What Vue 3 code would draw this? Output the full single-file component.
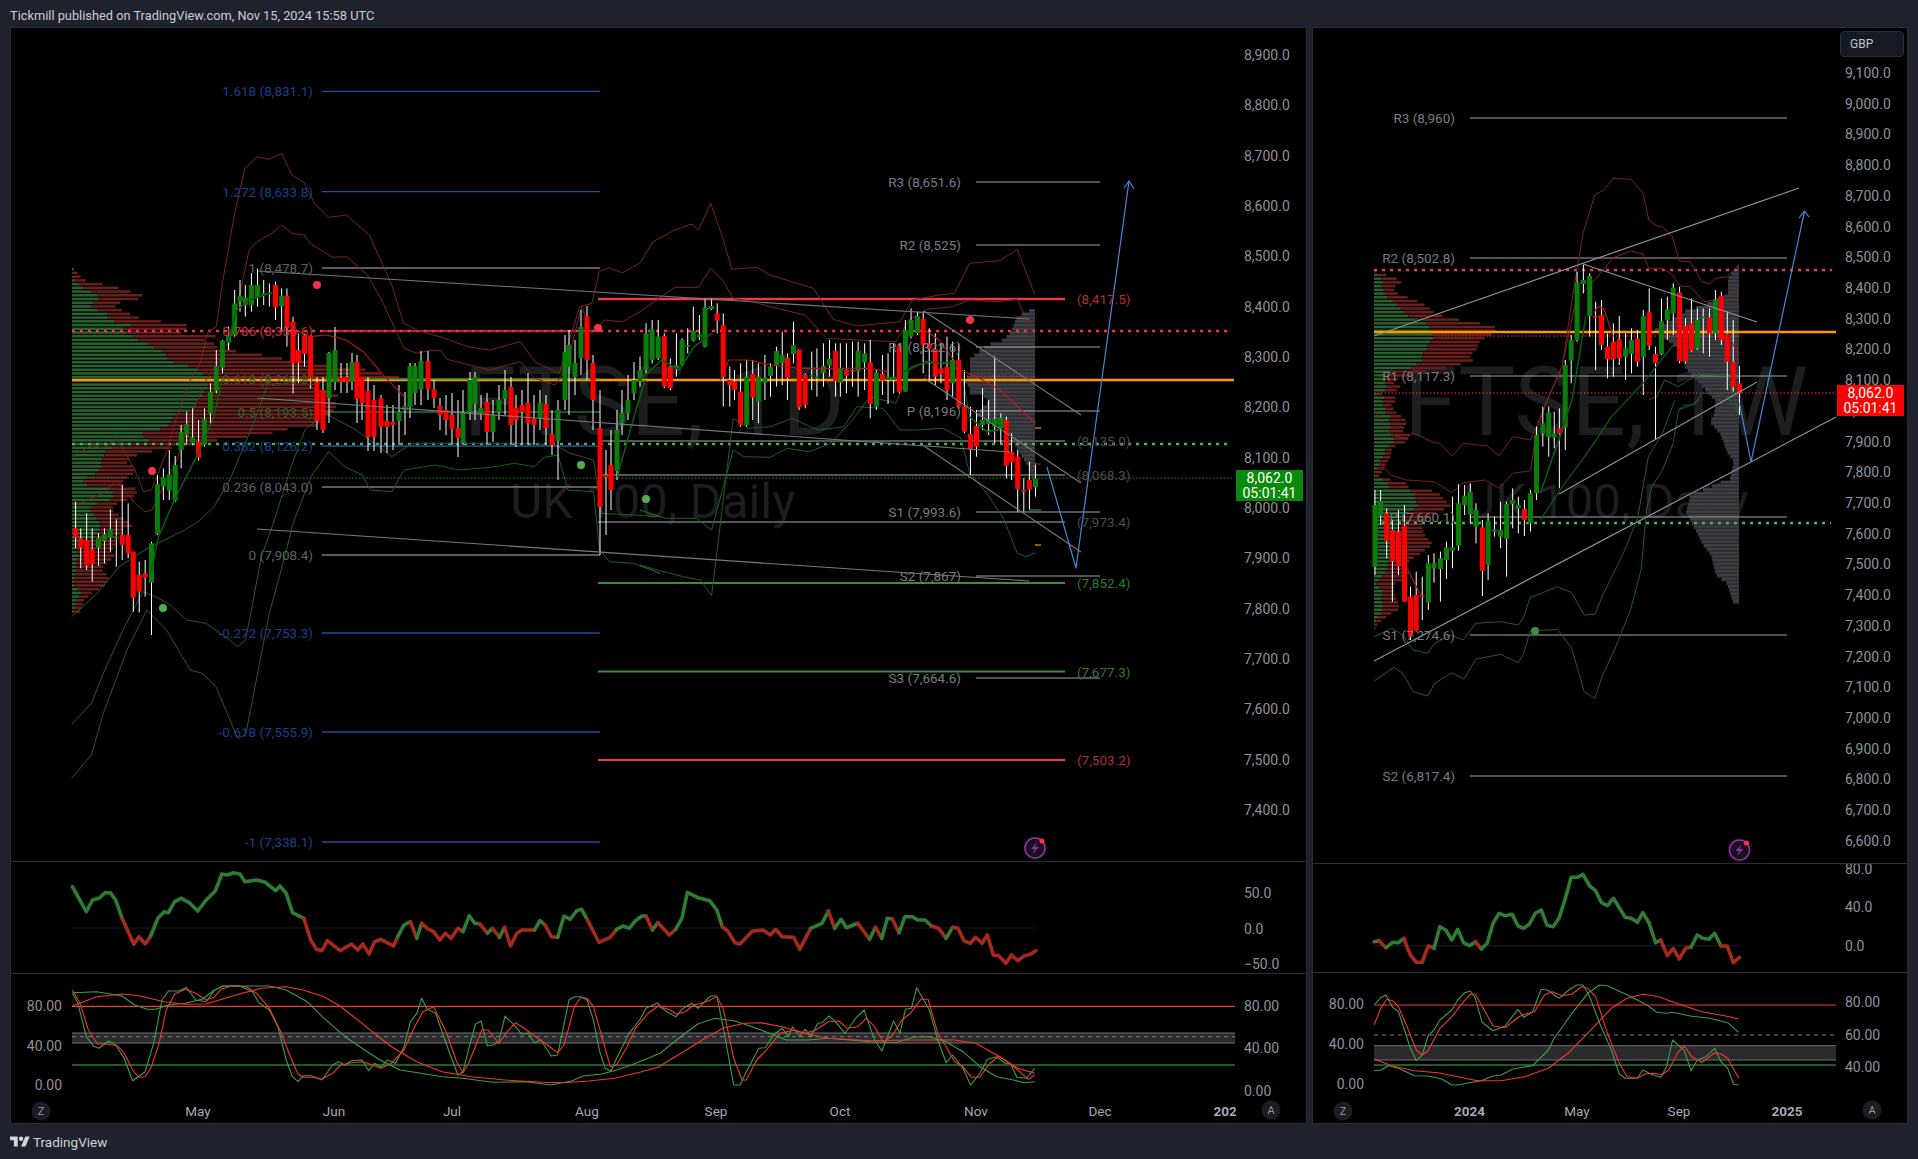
<script setup>
// zoom crops were read off at different x scales, y is always 3x
const frame = (ox, oy, sx, sy = 3) => (s) =>
  s.trim().split(/\s+/).map((p) => {
    const [x, y] = p.split(',').map(Number)
    return [ox + x / sx, oy + y / sy]
  })
const z1 = frame(0, 0, 2.45)
const z2 = frame(640, 200, 2.306)
const z3 = frame(1300, 0, 2.537)
const z4 = frame(0, 850, 2.376)
const z5 = frame(660, 820, 2.376)
const z6 = frame(1300, 820, 2.537)
const z7 = frame(1360, 400, 2.81)
const z8 = frame(40, 380, 2.529)
const real = frame(0, 0, 1, 1)

const GREEN = '#0b7d0b'
const RED = '#ff0000'
const BAND_RED = '#7a231d'
const BAND_GREEN = '#235c28'

const poly = (pts, stroke, width = 1) => ({
  tag: 'polyline',
  attrs: {
    points: pts.map((p) => p[0].toFixed(1) + ',' + p[1].toFixed(1)).join(' '),
    fill: 'none',
    stroke,
    'stroke-width': width,
    'stroke-linejoin': 'round'
  }
})
const line = (x1, y1, x2, y2, stroke, width = 1, dash) => ({
  tag: 'line',
  attrs: { x1, y1, x2, y2, stroke, 'stroke-width': width, 'stroke-dasharray': dash }
})
const rect = (x, y, w, h, fill) => ({ tag: 'rect', attrs: { x, y, width: w, height: h, fill } })
const circle = (cx, cy, r, fill, stroke) => ({
  tag: 'circle',
  attrs: { cx, cy, r, fill, stroke, 'stroke-width': stroke ? 1.5 : undefined }
})
const text = (x, y, str, cls = 'axis', anchor = 'start', fill) => ({
  text: str,
  attrs: { x, y, class: cls, 'text-anchor': anchor, fill }
})

// rows: "x colour bodyTop bodyBottom wickTop wickBottom"
const candles = (map, rows, width = 5) => {
  const wicks = []
  const bodies = []
  rows.split(';').forEach((row) => {
    const [x, c, t, b, wt, wb] = row.trim().split(/\s+/)
    const [[px, top], [, bot], [, wickTop], [, wickBot]] = map(`${x},${t} ${x},${b} ${x},${wt} ${x},${wb}`)
    wicks.push(line(px, wickTop, px, wickBot, '#ffffff', 1))
    bodies.push(rect(px - width / 2, top, width, Math.max(bot - top, 1.5), c === 'g' ? GREEN : RED))
  })
  return [...wicks, ...bodies]
}

// linear lookup between table rows [y, a, b]
const lookup = (table, y) => {
  let i = 0
  while (i < table.length - 2 && table[i + 1][0] < y) i++
  const [y0, a0, b0] = table[i]
  const [y1, a1, b1] = table[i + 1]
  const t = Math.min(1, Math.max(0, (y - y0) / (y1 - y0)))
  return [a0 + (a1 - a0) * t, b0 + (b1 - b0) * t]
}

const parseTable = (s) => s.trim().split(/[;\n]+/).filter((r) => r.trim()).map((r) => r.trim().split(/\s+/).map(Number))

const volumeLeft = (x0, rows, step = 3.72) => {
  const table = parseTable(rows)
  const out = []
  for (let y = table[0][0]; y <= table[table.length - 1][0]; y += step) {
    const [g, r] = lookup(table, y)
    out.push(rect(x0, y, g - x0, 2.5, '#28622e'))
    out.push(rect(g, y, Math.max(r - g, 0), 2.5, '#6b1f1b'))
  }
  return out
}
const volumeRight = (xEnd, rows, step = 3.72) => {
  const table = parseTable(rows).map((r) => [r[0], r[1], r[1]])
  const under = []
  const over = []
  for (let y = table[0][0]; y <= table[table.length - 1][0]; y += step) {
    const [x] = lookup(table, y)
    under.push(rect(x, y, xEnd - x, step + 0.3, '#2c2d31'))
    over.push(rect(x, y, xEnd - x, 2.4, '#3d3e44'))
  }
  return [...under, ...over]
}

// thick oscillator line split in coloured runs
const trendRuns = (map, runs) =>
  runs.map(([c, s]) => {
    const shape = poly(map(s), c === 'g' ? '#2f7d32' : '#a52a1c', 3.6)
    shape.attrs['stroke-linecap'] = 'round'
    return shape
  })

const priceLabels = (from, to, step, yOf, x) => {
  const out = []
  for (let p = from; p >= to; p -= step) {
    out.push(text(x, yOf(p), p.toLocaleString('en-US') + '.0'))
  }
  return out
}

const bolt = (cx, cy) => [
  circle(cx, cy, 11.5, '#14141a'),
  circle(cx, cy, 10, 'none', '#9c27b0'),
  {
    tag: 'path',
    attrs: {
      d: `M${cx + 2.5} ${cy - 6}L${cx - 4} ${cy + 1}H${cx}L${cx - 2.5} ${cy + 6}L${cx + 4} ${cy - 1}H${cx}Z`,
      fill: '#9c27b0'
    }
  },
  circle(cx + 7, cy - 7, 2.6, '#f23645')
]

const roundBtn = (cx, cy, label) => [
  circle(cx, cy, 9.5, '#1c1d24'),
  text(cx, cy, label, 'tiny', 'middle')
]

const badge = (x, y, w, h, fill) => [
  rect(x, y, w, h, fill),
  text(x + w / 2, y + h * 0.27, '8,062.0', 'badge', 'middle'),
  text(x + w / 2, y + h * 0.73, '05:01:41', 'badge', 'middle')
]

/* ---------- left chart, daily ---------- */
const leftY = (p) => 205.9 + (8600 - p) * 0.5035

const leftCandles = [
  ...candles(z8, `90 r 445 472 365 505;103 r 475 503 445 565;118 r 480 557 400 570;132 r 508 552 445 605;148 g 473 503 460 558;
    163 g 463 483 445 550;178 g 448 473 388 515;193 g 470 472 418 560;208 r 465 495 315 540;223 r 465 520 370 535;236 r 515 653 515 695;
    251 r 585 635 545 697;266 r 580 593 540 650;282 g 490 608 485 765;297 g 313 462 285 465;312 g 292 320 265 360;327 g 283 332 210 360;
    342 g 255 362 228 365;357 g 157 210 135 265;371 g 133 165 95 190;386 g 172 190 85 195;401 r 185 233 120 242;416 g 118 195 85 200;
    431 g 35 100 10 135`),
  ...candles(z1, `530 g 1098 1172 1050 1180;545 g 1022 1103 1020 1120;560 g 1005 1028 980 1050;575 g 910 1005 870 1010;588 g 888 905 840 935;
    601 g 892 915 855 950;616 g 855 915 820 935;631 g 855 893 805 920;646 g 880 882 840 915;660 g 878 880 850 920;675 r 855 922 845 960;
    690 g 887 918 865 990;703 r 888 983 865 1040;718 r 965 1090 950 1180;731 r 1050 1088 1000 1150;746 r 1008 1062 1000 1100;761 r 1010 1135 1005 1165`),
  ...candles(real, `317 r 382 421 377 430;323 r 390 430 377 433;329 g 353 398 352 423;335 g 350 382 327 390;341 r 378 382 363 393;347 r 377 382 363 393;
    352 g 362 382 353 390;357 r 362 399 355 423;362 r 377 403 377 420;368 r 391 437 377 451;374 r 400 437 385 451;381 r 398 427 395 453;
    387 r 421 427 405 453;393 r 422 425 405 450;399 g 412 421 385 445;405 g 406 410 392 435;410 g 366 407 363 418;415 g 366 393 363 405;
    421 g 361 389 351 405;428 r 361 389 351 400;434 r 389 398 380 408;440 r 406 415 398 430;446 r 410 420 395 435;452 r 415 429 393 445;
    458 r 428 438 400 457;463 g 413 443 390 445;470 g 380 412 372 420;475 g 377 404 372 420;481 g 408 413 395 420;487 r 402 432 393 445;
    493 g 415 432 400 442;499 g 400 412 385 420;505 g 390 399 370 415;511 r 387 425 377 445;516 r 408 420 395 447;522 r 405 412 390 445;
    528 r 403 423 373 445;534 r 419 425 395 445;540 g 403 418 390 430;546 r 404 428 395 445;552 r 434 445 410 455;558 g 410 441 400 480;
    565 g 352 400 335 410;569 g 345 367 330 415;575 g 363 377 340 395;581 g 327 358 310 375;587 r 316 360 306 380;593 r 363 400 355 430;
    600 r 428 507 390 555;606 r 475 477 450 535;611 r 465 490 430 510;617 g 430 471 410 480;622 g 413 423 390 435;628 g 400 413 375 420;
    634 g 380 393 362 400`),
  ...candles(z2, `0 g 510 545 470 560;14 g 400 510 370 520;28 g 388 480 360 490;42 g 410 475 360 480;56 r 408 560 400 565;70 r 500 565 475 570;
    84 g 495 505 400 530;97 g 420 495 415 500;110 g 435 440 385 460;123 g 392 422 320 425;137 g 403 412 345 420;150 g 322 440 295 442;
    165 g 318 327 295 330;178 r 340 362 310 400;192 r 375 530 340 620;207 r 540 555 500 620;218 r 545 570 510 600;232 r 575 675 490 680;
    246 g 530 675 480 680;260 r 522 592 480 660;273 g 530 605 490 670;288 g 533 548 465 600;301 g 500 528 490 590;315 g 453 495 440 560;
    328 g 465 490 395 555;340 r 473 533 460 600;354 g 435 462 365 490;367 r 448 622 450 630;381 r 525 615 520 625;396 g 525 528 455 570;
    408 g 530 533 445 590;423 g 498 518 430 560;437 g 477 497 420 530;451 r 453 543 430 590;462 g 505 548 430 590;476 r 510 527 430 580;
    490 r 510 513 425 560;503 g 453 513 425 590;518 g 460 488 430 570;531 r 487 612 420 655;545 g 518 620 510 630;559 r 522 542 465 585;
    572 g 530 540 460 612;585 g 530 540 430 580;598 r 437 575 430 580;612 g 390 575 360 575;625 g 360 410 325 415;640 g 348 400 335 405;
    653 r 356 435 335 520;667 r 430 447 385 545;681 r 447 530 400 555;694 r 505 522 430 550;708 r 500 572 410 600;721 g 480 550 425 590;
    735 r 480 620 430 625;748 r 620 695 510 700;762 r 702 748 620 825;776 r 678 740 630 770;790 g 660 675 565 690;804 g 658 672 600 705;
    818 g 657 680 470 730;832 g 653 685 640 730;845 r 660 797 650 835;857 r 755 787 700 840;871 r 770 867 750 935;885 r 870 873 835 935;
    898 r 840 868 785 930;912 g 835 862 790 890`)
]

const leftBands = [
  poly([...z8('80,230 130,195 160,205 195,175 240,270 262,335 282,330 320,215 345,115 380,0'),
    ...z1('490,1090 510,995 530,980 545,850 575,640 600,505 630,470 660,478 690,460 715,525 745,548 770,610 805,652 848,645 905,705 960,855 988,968 1020,990 1090,1015 1145,1040 1200,1050 1275,1025 1310,1085 1370,1120 1420,920 1450,910 1468,815 1490,803 1525,818 1568,790'),
    ...z2('30,125 80,90 120,72 135,90 163,10 190,110 212,208 270,202 300,225 350,245 400,265 445,358 500,378 600,365 628,300 690,285 725,280 760,190 830,182 870,148 910,282')], BAND_RED),
  poly([...z8('80,380 130,355 160,340 195,300 240,370 265,395 283,390 320,300 345,245 380,110 420,0'),
    ...z1('560,1040 590,870 610,750 630,725 660,705 690,675 715,700 745,705 760,730 815,772 850,770 900,825 935,900 990,1045 1020,1060 1050,1052 1080,1052 1095,1078 1200,1110 1275,1085 1310,1135 1360,1155 1390,1100 1400,1040 1425,920'),
    ...z1('1450,1000 1480,960 1525,965 1568,935'),
    ...z2('80,262 135,262 163,205 190,240 215,295 260,305 300,320 380,345 430,415 500,420 590,425 620,360 660,328 720,320 760,300 820,305 870,298 912,415')], BAND_RED),
  poly([...z8('80,710 145,640 200,560 265,510 365,450 400,425 440,380 480,300 540,130 580,0')], BAND_GREEN),
  poly([...z8('80,1033 130,970 160,880 210,750 260,635 300,655 330,675 370,720 420,730 480,780 500,800 520,780 560,530 590,430 635,260 670,150 720,100 800,150 890,230 940,190 1000,190 1100,190 1250,190 1310,200 1340,220 1400,240 1420,400 1500,405 1568,410'),
    ...z2('0,930 60,955 130,955 165,990 215,750 240,770 300,772 340,745 390,755 440,730 490,660 530,590 590,610 625,500 650,490 720,490 745,540 760,650 790,690 820,690 835,680')], BAND_GREEN),
  poly([...z8('80,1195 130,1125 160,1000 220,810 270,690 320,750 340,790 380,870 410,880 445,920 500,1075 520,1065 580,700 610,570 640,430 685,290 730,215 770,260 815,285 835,330 890,335 920,270 1000,255 1060,270 1140,262 1200,250 1250,260 1275,232 1310,225 1335,330 1400,335 1415,510 1440,545 1500,550 1568,580'),
    ...z2('0,1095 40,1110 100,1130 140,1140 165,1187 215,655 250,685 300,680 350,655 410,690 470,680 500,620 560,625 600,690 640,690 700,685 740,715 760,820 800,880 840,960 870,1060 890,1070 912,1058')], BAND_GREEN)
]

const leftAverages = [
  poly(z1('718,985 760,1010 800,1005 848,1020 890,1055 935,1120 990,1190'), '#a81818', 1.2),
  poly(z2('185,540 205,480 250,480 300,495 370,505 450,505 530,505 570,515'), '#a81818', 1.2),
  poly(z2('650,385 690,420 740,510 790,540 830,570 912,670'), '#b71c1c', 1.2),
  poly(z8('282,570 300,470 340,360 400,220 440,110 460,0'), '#0a5f0a', 1.5),
  poly(z1('555,1040 580,930 610,900 665,878'), '#0a5f0a', 1.5),
  poly(z8('1460,290 1500,120 1530,0'), '#0a5f0a', 1.5),
  poly(z2('0,540 50,480 90,510 125,440 165,400'), '#0a5f0a', 1.5),
  poly(z2('600,520 660,485 720,490'), '#0a5f0a', 1.5),
  poly(z2('760,650 800,695 830,690'), '#0a5f0a', 1.5)
]

const fibs = [
  ['1.618 (8,831.1)', 91.3, '#1c4f9c', '#14408c'],
  ['1.272 (8,633.8)', 191.7, '#1c4f9c', '#14408c'],
  ['1 (8,478.7)', 268, '#787b86', '#5d606b'],
  ['0.786 (8,356.6)', 331, '#f23645', '#c9303c'],
  ['0.618 (8,260.8)', 379, '#388e3c', '#2f5f32'],
  ['0.5 (8,193.5)', 412, '#2e6b32', '#2f5f32'],
  ['0.382 (8,126.2)', 446, '#1c4f9c', '#14408c'],
  ['0.236 (8,043.0)', 487, '#787b86', '#5d606b'],
  ['0 (7,908.4)', 555, '#787b86', '#5d606b'],
  ['-0.272 (7,753.3)', 633, '#1c4f9c', '#14408c'],
  ['-0.618 (7,555.9)', 732, '#1c4f9c', '#14408c'],
  ['-1 (7,338.1)', 842, '#1c4f9c', '#14408c']
]
const leftPivots = [
  ['R3 (8,651.6)', 182], ['R2 (8,525)', 245], ['R1 (8,322.6)', 347], ['P (8,196)', 411],
  ['S1 (7,993.6)', 512], ['S2 (7,867)', 576], ['S3 (7,664.6)', 678]
]
const leftLevels = [
  ['(8,417.5)', 299, '#f23645', '#b02c38', 2.5],
  ['(8,135.0)', 441, '#555558', '#4c4c50', 2],
  ['(8,068.3)', 475, '#555558', '#4c4c50', 2],
  ['(7,973.4)', 522, '#555558', '#4c4c50', 2],
  ['(7,852.4)', 583, '#388e3c', '#2f7a33', 2],
  ['(7,677.3)', 671.5, '#388e3c', '#2f7a33', 2],
  ['(7,503.2)', 760, '#f23645', '#b02c38', 2]
]

const leftMain = [
  text(654, 402, 'FTSE, 1D', 'mark-big', 'middle'),
  text(653, 501, 'UK 100, Daily', 'mark-small', 'middle'),
  ...volumeLeft(72, `268 73 74;272 72 78;276 73 81;280 76 87;284 81 109;287 84 120;291 93 133;295 99 145;299 98 135;302 92 117;306 91 115;
    310 100 124;313 108 131;317 108 140;321 116 167;324 132 188;328 122 186;332 127 180;335 133 216;339 139 204;343 151 216;347 155 218;
    350 163 237;354 167 265;358 167 286;362 175 322;365 190 331;369 200 371;373 204 384;376 212 400;383 208 314;387 208 318;391 204 331;
    394 204 339;398 198 329;403 196 337;408 196 335;413 176 331;418 172 317;423 170 329;427 166 291;431 143 277;435 143 250;439 150 218;
    448 105 163;453 105 139;460 101 125;467 101 135;473 95 133;478 83 125;483 83 121;488 113 137;493 113 137;498 113 129;504 91 113;
    510 91 113;515 95 121;520 99 127;524 101 134;528 99 123;533 99 121;537 93 115;541 76 115;545 74 115;550 76 111;555 80 115;560 76 109;
    565 76 103;570 76 103;575 74 109;580 74 107;584 74 105;588 78 99;592 82 91;597 78 87;600 76 83;604 76 83;608 74 81;612 74 80`),
  ...volumeRight(1035, `309 1029;315 1017;330 1011;338 1004;343 989;347 983;357 970;373 970;380 963;385 970;392 970;393 983;400 989;413 976;427 1006;440 1013;453 1021;467 1030;477 1032`),
  line(72, 380, 1234, 380, '#ff9800', 2.5),
  line(72, 331, 1232, 331, '#f23645', 2.5, '3 5'),
  line(72, 444, 1232, 444, '#4caf50', 2.5, '3 5'),
  line(72, 478, 1234, 478, '#1c8f1c', 1, '1.5 2'),
  line(925, 376, 1035, 376, '#f23645', 1, '1.5 2'),
  ...fibs.map(([, y, c]) => line(322, y, 600, y, c, 1.3)),
  ...leftPivots.map(([, y]) => line(976, y, 1100, y, '#a0a3ab', 1.2)),
  ...leftLevels.map(([, y, c, , w]) => line(598, y, 1065, y, c, w)),
  ...leftBands,
  ...leftCandles,
  ...leftAverages,
  line(258, 271, 1029, 319, '#77797f', 1.1),
  line(257, 398, 1010, 452, '#77797f', 1.1),
  line(257, 529, 1029, 581, '#77797f', 1.1),
  line(924, 311, 1081, 415, '#77797f', 1.1),
  line(924, 378, 1081, 483, '#77797f', 1.1),
  line(924, 446, 1081, 552, '#77797f', 1.1),
  line(1035, 428, 1041, 428, '#ff9800', 1.2),
  line(1035, 545, 1041, 545, '#ff9800', 1.2),
  line(1035, 464, 1041, 464, '#7a2320', 1.2),
  line(1029, 510, 1041, 510, '#1f6b5e', 1.5),
  poly(real('1047,467 1076,568 1129,181'), '#4a86d8', 1.2),
  poly(real('1124,188 1129,181 1134,189'), '#4a86d8', 1.2),
  circle(317, 285, 4, '#f23645'),
  circle(152, 471, 4, '#f23645'),
  circle(598, 328, 4, '#f23645'),
  circle(970, 320, 4, '#f23645'),
  circle(163, 608, 4, '#4caf50'),
  circle(581, 465, 4, '#4caf50'),
  circle(646, 499, 4, '#4caf50'),
  ...fibs.map(([t, y, , c]) => text(313, y, t, 'lbl', 'end', c)),
  ...leftPivots.map(([t, y]) => text(961, y, t, 'lbl', 'end', '#787b86')),
  ...leftLevels.map(([t, y, , c]) => text(1077, y, t, 'lbl', 'start', c)),
  ...priceLabels(8900, 7400, 100, leftY, 1244),
  ...badge(1236, 470, 67, 31, '#0a8a0a'),
  ...bolt(1035, 848)
]

const leftOsc = [
  line(72, 928, 1035, 928, '#181a22', 1.2),
  ...trendRuns(z4, [
    ['g', '172,110 205,185 220,150 235,145 250,128 262,128 275,150 290,205'],
    ['r', '290,205 318,283 330,260 345,282 358,258'],
    ['g', '358,258 375,205 390,185 400,188 415,155 430,145 450,158 470,183 490,150 512,122 527,72 540,75 555,68 570,72 582,95 610,90 630,97 655,122 665,108 680,130 695,188 722,205'],
    ['r', '722,205 738,270 752,298 765,302 778,272 808,302 835,282 850,300 862,282 877,312 890,275 905,268 935,288 945,260'],
    ['g', '945,260 960,225 975,215'],
    ['r', '975,215 990,265'],
    ['g', '990,265 1002,220'],
    ['r', '1002,220 1018,238 1030,245 1045,270 1058,250 1072,265 1088,235 1100,245'],
    ['g', '1100,245 1115,197 1128,220 1140,222'],
    ['r', '1140,222 1158,250'],
    ['g', '1158,250 1170,235'],
    ['r', '1170,235 1187,262'],
    ['g', '1187,262 1199,232'],
    ['r', '1199,232 1213,288 1228,250 1240,240 1270,240'],
    ['g', '1270,240 1283,212 1295,225'],
    ['r', '1295,225 1310,260 1325,262'],
    ['g', '1325,262 1340,198 1355,208 1370,182 1382,178 1395,208'],
    ['r', '1395,208 1423,277 1450,262 1465,238'],
    ['g', '1465,238 1480,228 1495,235 1510,212 1525,198 1535,198'],
    ['r', '1535,198 1550,240'],
    ['g', '1550,240 1563,218'],
    ['r', '1563,218 1568,225']
  ]),
  ...trendRuns(z5, [
    ['r', '0,315 22,345 37,328'],
    ['g', '37,328 52,295 65,217 90,233 118,242 135,270 148,320'],
    ['r', '148,320 162,335 178,368 190,372 220,333 245,330 262,345 275,328 290,350 318,352 332,388 358,325'],
    ['g', '358,325 385,310 400,273'],
    ['r', '400,273 415,325'],
    ['g', '415,325 430,298 443,323 470,310'],
    ['r', '470,310 498,358'],
    ['g', '498,358 512,322'],
    ['r', '512,322 527,355'],
    ['g', '527,355 540,295 552,297'],
    ['r', '552,297 568,338'],
    ['g', '568,338 582,290 600,290 612,300 630,300 645,318'],
    ['r', '645,318 662,325 680,355'],
    ['g', '680,355 695,322'],
    ['r', '695,322 708,325 722,362 737,370 750,352 765,370 778,345 792,405 805,407 822,430 835,405 850,422 865,408 880,403 893,392']
  ]),
  text(1244, 893, '50.0'),
  text(1244, 929, '0.0'),
  text(1244, 964, '−50.0')
]

const STOCH_GREEN = '#3f9e44'
const STOCH_RED = '#f0392b'

const leftStoch = [
  rect(72, 1033, 1163, 10, '#2b2b2d'),
  line(72, 1033, 1235, 1033, '#6f7178', 1),
  line(72, 1043, 1235, 1043, '#6f7178', 1),
  line(72, 1036.7, 1235, 1036.7, '#787b86', 1, '4 4'),
  line(72, 1006.3, 1235, 1006.3, '#f23a2c', 1.2),
  line(72, 1065, 1235, 1065, '#4caf50', 1.2),
  poly([...z4('172,430 185,460 205,560 222,588 235,595 258,573 275,585 295,625 315,692 345,665 365,580 385,450 400,423 425,423 443,412 465,450 490,455 510,420 530,408 570,408 600,425 615,458 640,480 660,530 680,630 695,680 708,695 720,677 740,677 765,690 790,645 805,635 820,645 835,632 860,630 876,662 890,640 905,652 920,630 940,640 960,590 975,515 990,490 1002,445 1015,478 1035,490 1060,580 1088,675 1100,665 1115,590 1130,522 1143,513 1158,588 1172,585 1185,575 1200,498 1225,530 1240,553 1255,550 1270,578 1285,570 1310,618 1325,615 1352,450 1365,440 1380,440 1395,450 1410,510 1425,605 1438,655 1452,663 1465,625 1495,550 1520,510 1535,475 1563,458'),
    ...z5('0,560 20,578 38,590 52,568 75,550 90,565 120,528 135,528 150,620 175,795 190,795 205,755 235,685 250,683 270,645 290,625 305,650 315,620 332,650 345,628 358,650 375,610 385,608 402,588 420,610 440,640 465,595 485,570 510,660 527,693 555,603 570,640 583,568 597,565 610,503 640,570 660,660 680,728 695,705 720,745 738,795 760,760 778,718 800,710 820,730 832,730 848,772 870,775 890,745')], STOCH_GREEN, 1.1),
  poly([...z4('172,420 190,460 210,540 232,582 255,582 280,588 295,610 315,660 330,682 345,680 360,650 378,580 395,480 415,432 440,418 465,430 490,450 510,440 525,418 550,408 585,410 610,430 640,475 665,540 690,620 708,672 720,682 745,682 765,688 790,670 810,645 835,638 860,635 880,643 905,655 930,640 960,600 985,530 1005,485 1030,470 1060,545 1085,635 1100,668 1115,635 1145,540 1160,540 1185,580 1205,545 1225,518 1245,535 1270,558 1295,580 1325,608 1340,585 1365,470 1380,442 1395,445 1410,470 1430,560 1450,650 1465,645 1490,590 1510,535 1540,490 1568,465'),
    ...z5('0,560 25,570 38,582 60,575 80,555 110,545 135,530 150,565 175,715 195,780 205,780 230,720 260,680 285,640 320,630 345,640 370,630 400,605 425,603 445,625 470,620 490,595 510,620 530,665 550,650 575,600 595,580 620,538 637,538 660,640 680,680 700,725 720,740 740,772 760,772 780,735 805,708 830,730 850,750 875,778 890,765')], STOCH_RED, 1.1),
  poly([...z4('172,428 230,425 290,438 320,465 350,478 370,478 400,465 440,460 480,448 510,420 530,408 640,408 680,420 730,455 770,505 820,560 860,595 900,628 950,660 1000,670 1050,680 1100,685 1170,697 1250,695 1310,705 1360,692 1385,678 1430,672 1465,660 1500,645 1540,625 1568,610'),
    ...z5('0,700 30,670 60,640 90,612 130,595 175,602 200,612 240,630 300,660 350,660 400,655 450,660 500,665 560,668 600,652 640,650 680,665 720,695 760,740 800,770 840,780 865,788 890,785')], STOCH_GREEN, 1.1),
  poly([...z4('172,468 230,440 290,432 330,437 390,455 440,463 490,462 560,435 620,415 680,410 720,420 770,440 810,470 870,530 930,590 990,635 1050,665 1120,680 1200,690 1290,697 1340,698 1400,693 1460,685 1520,667 1568,650'),
    ...z5('0,738 50,700 100,660 150,625 200,610 240,608 290,620 340,640 400,655 500,662 600,660 700,660 750,670 800,705 850,745 890,760')], STOCH_RED, 1.1),
  text(62, 1005.7, '80.00', 'axis', 'end'),
  text(62, 1045.7, '40.00', 'axis', 'end'),
  text(62, 1084.7, '0.00', 'axis', 'end'),
  text(1244, 1005.7, '80.00'),
  text(1244, 1047.7, '40.00'),
  text(1244, 1090.7, '0.00'),
  ...['May:198', 'Jun:334', 'Jul:452', 'Aug:587', 'Sep:716', 'Oct:840', 'Nov:976', 'Dec:1100'].map((m) => {
    const [name, x] = m.split(':')
    return text(+x, 1110.7, name, 'time', 'middle')
  }),
  text(1229, 1110.7, '2025', 'time year', 'middle'),
  rect(1236, 1098, 60, 25, '#000000'),
  ...roundBtn(41, 1111, 'Z'),
  ...roundBtn(1271, 1110, 'A')
]

/* ---------- right chart, weekly ---------- */
const rightY = (p) => 72.9 + (9100 - p) * 0.3072

const rightPivots = [
  ['R3 (8,960)', 118], ['R2 (8,502.8)', 258], ['R1 (8,117.3)', 376],
  ['P (7,660.1)', 517], ['S1 (7,274.6)', 635], ['S2 (6,817.4)', 776]
]

const rightCandles = [
  ...candles(z7, `42 g 315 500 270 525;58 g 303 348 270 375;75 r 340 423 325 475;91 r 390 483 360 605;108 r 395 500 330 525;125 r 378 605 315 605;
    142 r 590 710 560 720;158 r 585 693 515 695;175 r 586 590 530 660;192 g 490 608 465 630;208 g 490 505 460 548;226 g 475 507 455 605;
    243 g 442 480 425 537;260 g 442 452 290 505;277 g 310 437 253 452;294 g 287 315 255 345;310 g 275 342 250 370;326 g 330 380 310 430;
    344 r 382 513 360 588;360 g 362 495 340 540;378 g 388 395 350 410;395 g 390 410 305 445;412 g 312 417 305 530;429 g 300 312 265 385;
    445 g 315 326 290 400;462 r 327 360 300 408;479 g 280 370 270 395`),
  ...candles(z3, `600 g 1305 1480 1280 1500;616 g 1270 1300 1220 1340;631 g 1237 1312 1220 1370;645 g 1300 1312 1235 1345;658 r 1285 1300 1225 1465;
    673 g 1095 1283 1080 1350;688 g 1020 1082 1005 1150;703 g 848 1020 815 1025;719 g 840 852 795 880;735 g 828 948 820 1010;750 r 948 952 905 1110;
    765 r 945 1035 900 1050;780 r 1040 1078 1000 1135;795 r 1025 1078 970 1130;810 r 1018 1075 948 1095;826 g 1045 1070 1000 1140;841 g 1020 1062 985 1120;
    856 r 1015 1085 990 1100;871 g 948 1070 930 1185;886 r 937 1037 865 1050;902 r 1062 1090 1040 1320;917 g 963 1062 895 1065;932 g 928 960 890 1020;
    947 g 863 940 850 1005;963 r 877 1083 860 1090;978 r 978 1085 955 1090;993 r 970 1052 895 1055;1008 g 960 1045 925 1050;1023 g 950 953 925 1060;
    1039 r 952 1000 925 1070;1054 g 898 1000 870 1020;1069 r 888 1020 875 1035;1084 r 1005 1085 935 1170;1099 r 1085 1160 960 1175;1115 r 1150 1180 1098 1245`)
]

const rightBands = [
  poly(z3('188,1230 230,1305 270,1315 285,1298 340,1328 355,1330 385,1368 415,1330 475,1338 505,1367 540,1310 585,1320 600,1280 630,1190 665,1100 690,900 718,700 748,585 770,570 795,535 840,538 870,578 885,660 905,678 920,680 945,710 962,783 990,785 1020,845 1040,852 1055,835 1085,830 1113,795'), BAND_RED),
  poly(z3('188,1365 230,1425 270,1440 340,1445 385,1478 415,1448 470,1440 505,1465 540,1420 585,1412 600,1290 630,1195 665,1100 700,900 755,830 795,773 840,753 870,762 885,805 920,805 945,825 965,858 990,860 1025,905 1050,900 1085,885 1113,870'), BAND_RED),
  poly(z7('40,710 90,685 120,705 150,750 190,760 210,730 255,705 290,720 325,670 395,665 445,675 460,650 478,593 555,560 595,578 630,645 660,643 680,590 740,460 780,355 810,170 850,100 885,0'), BAND_GREEN),
  poly(z3('885,1200 905,1190 925,1140 960,1160 985,1140 1020,1122 1085,1127 1113,1240'), BAND_GREEN),
  poly(z7('40,843 95,802 120,820 150,875 190,888 210,850 258,818 292,838 325,778 395,763 445,788 460,760 478,693 555,688 595,745 630,875 660,895 680,830 715,750 760,630 790,510 805,330 820,260 850,210 880,130 895,30 930,15 950,0'), BAND_GREEN),
  poly(z3('960,1230 975,1215 1000,1215 1020,1180 1050,1178 1085,1190 1113,1240'), BAND_GREEN)
]

const rightMain = [
  text(1606, 402, 'FTSE, 1W', 'mark-big', 'middle'),
  text(1606, 501, 'UK 100, Daily', 'mark-small', 'middle'),
  ...volumeLeft(1374, `270 1374 1376;275 1378 1390;278 1382 1398;282 1384 1402;286 1381 1393;290 1384 1395;294 1387 1400;298 1387 1415;301 1397 1419;305 1397 1428;309 1404 1431;
    313 1404 1436;316 1412 1448;320 1418 1467;323 1430 1486;327 1429 1499;335 1434 1489;339 1432 1480;343 1428 1479;347 1426 1476;350 1426 1478;354 1420 1466;358 1426 1477;
    362 1417 1464;366 1416 1451;369 1395 1430;373 1385 1418;377 1387 1399;381 1385 1393;384 1387 1399;388 1389 1403;392 1375 1379;396 1385 1395;399 1383 1397;403 1383 1391;
    407 1385 1393;412 1385 1397;415 1391 1401;419 1389 1406;423 1391 1406;427 1391 1404;430 1389 1403;434 1393 1410;438 1393 1408;442 1395 1404;445 1389 1395;449 1385 1391;
    453 1385 1391;457 1383 1390;461 1379 1387;464 1379 1385;468 1377 1384;472 1375 1381;475 1375 1379;479 1385 1393;483 1389 1410;487 1389 1408;490 1415 1437;498 1415 1444;
    505 1419 1451;513 1406 1433;523 1399 1422;533 1396 1424;543 1392 1433;550 1392 1424;557 1390 1413;563 1388 1406;570 1387 1410;577 1381 1406;583 1376 1394;590 1383 1394;
    597 1381 1396;603 1383 1399;608 1383 1399;613 1381 1390;620 1376 1381;625 1374 1376;630 1374 1375`),
  ...volumeRight(1739, `265 1737;277 1728;293 1728;300 1714;310 1684;328 1655;347 1678;367 1686;393 1710;400 1716;413 1714;420 1710;433 1721;450 1727;460 1734;477 1730;493 1691;510 1686;533 1698;543 1703;553 1711;573 1716;582 1727;603 1734`),
  line(1374, 332, 1836, 332, '#ff9800', 2.5),
  line(1374, 270, 1832, 270, '#f23645', 2.5, '3 5'),
  line(1374, 523, 1831, 523, '#4caf50', 2.5, '3 5'),
  line(1434, 336, 1740, 336, '#f23645', 1, '1.5 2'),
  line(1374, 393, 1836, 393, '#f23645', 1, '1.5 2'),
  ...rightPivots.map(([, y]) => line(1470, y, 1787, y, '#a0a3ab', 1.2)),
  ...rightBands,
  ...rightCandles,
  poly(z3('1084,1000 1113,1065'), '#a81818', 1.2),
  poly(z3('745,940 755,920 770,925 795,1010'), '#a81818', 1.2),
  poly(z7('135,510 170,585'), '#a81818', 1.2),
  poly(z7('545,165 578,60'), '#a81818', 1.2),
  poly(z3('610,1480 650,1340 690,1200 725,950'), '#0a5f0a', 1.5),
  poly(z3('610,1560 660,1470 740,1340 790,1250 870,1150 950,1030'), '#0a5f0a', 1.2),
  line(1374, 336, 1799, 188, '#8f9198', 1.2),
  line(1559, 494, 1757, 382, '#8f9198', 1.2),
  line(1374, 661, 1836, 417, '#8f9198', 1.2),
  line(1583, 264, 1757, 322, '#8f9198', 1.2),
  poly(real('1739.5,403 1751,462 1804.5,211'), '#4a86d8', 1.2),
  poly(real('1799,218 1804.5,211 1809,217'), '#4a86d8', 1.2),
  circle(1535, 631, 4, '#3f8f44'),
  ...rightPivots.map(([t, y]) => text(1455, y, t, 'lbl', 'end', '#787b86')),
  ...priceLabels(9100, 6600, 100, rightY, 1845),
  ...badge(1837, 385, 67, 31, '#ff0000'),
  ...bolt(1739.5, 850)
]

const rightOsc = [
  line(1374, 945.7, 1739, 945.7, '#181a22', 1.2),
  ...trendRuns(z6, [
    ['g', '188,365 200,362'],
    ['r', '200,362 218,383'],
    ['g', '218,383 235,367 250,368 263,355'],
    ['r', '263,355 280,405 295,427 310,427 325,378 340,385'],
    ['g', '340,385 355,320 370,330 385,360 400,328 415,368 430,377 445,365'],
    ['r', '445,365 460,387'],
    ['g', '460,387 475,370 490,310 505,280 520,287 538,283 553,318 568,325 582,312 597,280 612,270 627,316 642,320 657,295 672,240 688,172 703,172 718,163 735,198 750,212 765,248 780,257 795,235 825,292 840,295 856,307 870,278 886,310 902,368 915,360'],
    ['r', '915,360 932,407 947,385 962,417 978,385 992,382'],
    ['g', '992,382 1008,345 1022,355 1037,358 1052,340 1068,378'],
    ['r', '1068,378 1084,378 1099,428 1115,412']
  ]),
  text(1845, 868.7, '80.0'),
  text(1845, 907, '40.0'),
  text(1845, 945.5, '0.0')
]

const rightStoch = [
  rect(1374, 1045.7, 462, 14.3, '#2b2b2d'),
  line(1374, 1045.7, 1836, 1045.7, '#6f7178', 1),
  line(1374, 1060, 1836, 1060, '#6f7178', 1),
  line(1374, 1035, 1836, 1035, '#787b86', 1, '4 4'),
  line(1374, 1005, 1836, 1005, '#f23a2c', 1.2),
  line(1374, 1065, 1836, 1065, '#4caf50', 1.2),
  poly(z6('188,555 205,533 218,525 235,562 250,575 265,630 280,685 295,722 310,705 325,648 340,630 355,600 385,570 400,540 418,518 432,513 445,535 462,607 490,632 520,618 553,568 568,592 590,575 612,508 628,510 657,535 685,507 703,495 718,495 735,530 760,610 790,690 810,762 825,775 855,775 870,750 890,762 915,772 930,740 945,660 975,692 992,752 1008,720 1030,710 1052,685 1068,725 1085,745 1100,793 1113,795'), STOCH_GREEN, 1.1),
  poly(z6('188,615 205,565 220,538 235,542 250,560 270,615 295,690 310,705 325,692 355,625 385,590 415,545 432,523 445,523 465,565 490,618 520,623 555,590 570,583 595,575 620,525 640,515 665,527 690,522 715,500 730,505 750,530 780,640 810,730 830,770 855,775 875,762 900,760 918,765 935,750 960,695 975,678 995,712 1020,727 1052,698 1068,702 1085,715 1113,775'), STOCH_RED, 1.1),
  poly(z6('188,752 205,750 225,737 250,745 290,767 325,768 360,777 385,795 400,795 430,788 460,782 490,768 510,765 540,747 590,737 630,690 645,655 690,580 730,520 760,495 780,497 840,530 880,555 905,577 930,580 945,577 990,588 1040,595 1085,608 1113,637'), STOCH_GREEN, 1.1),
  poly(z6('188,717 235,738 290,752 350,758 400,770 450,782 510,782 570,770 630,745 680,700 730,640 790,565 830,535 870,523 910,530 960,552 1020,575 1080,588 1113,597'), STOCH_RED, 1.1),
  text(1364, 1004.3, '80.00', 'axis', 'end'),
  text(1364, 1044.3, '40.00', 'axis', 'end'),
  text(1364, 1084.3, '0.00', 'axis', 'end'),
  text(1845, 1002.3, '80.00'),
  text(1845, 1035.3, '60.00'),
  text(1845, 1067.3, '40.00'),
  text(1469.5, 1110.7, '2024', 'time year', 'middle'),
  text(1577, 1110.7, 'May', 'time', 'middle'),
  text(1679, 1110.7, 'Sep', 'time', 'middle'),
  text(1787, 1110.7, '2025', 'time year', 'middle'),
  ...roundBtn(1343, 1111, 'Z'),
  ...roundBtn(1872, 1110, 'A')
]

const panels = [
  {
    id: 'daily',
    panes: [
      { x: 11, y: 28, w: 1295, h: 833, shapes: leftMain },
      { x: 11, y: 862, w: 1295, h: 111, shapes: leftOsc },
      { x: 11, y: 974, w: 1295, h: 149, shapes: leftStoch }
    ]
  },
  {
    id: 'weekly',
    panes: [
      { x: 1313, y: 28, w: 594, h: 835, shapes: rightMain },
      { x: 1313, y: 864, w: 594, h: 108, shapes: rightOsc },
      { x: 1313, y: 973, w: 594, h: 150, shapes: rightStoch }
    ]
  }
]
</script>

<template>
  <div class="page">
    <div class="topbar">Tickmill published on TradingView.com, Nov 15, 2024 15:58 UTC</div>

    <div class="charts">
      <div v-for="panel in panels" :key="panel.id" class="panel" :class="panel.id">
        <svg
          v-for="pane in panel.panes"
          :key="pane.y"
          class="pane"
          :width="pane.w"
          :height="pane.h"
          :viewBox="`${pane.x} ${pane.y} ${pane.w} ${pane.h}`"
        >
          <template v-for="(s, i) in pane.shapes" :key="i">
            <text v-if="s.text" v-bind="s.attrs">{{ s.text }}</text>
            <component :is="s.tag" v-else v-bind="s.attrs" />
          </template>
        </svg>
        <div v-if="panel.id === 'weekly'" class="currency">GBP</div>
      </div>
    </div>

    <div class="footer">
      <svg class="tv-logo" viewBox="0 0 36 28" width="20" height="16">
        <path d="M14 22H7V11H0V4h14v18zM28 22h-8l7.5-18h8L28 22z" fill="#d1d4dc" />
        <circle cx="20" cy="8" r="4" fill="#d1d4dc" />
      </svg>
      <span>TradingView</span>
    </div>
  </div>
</template>

<style>
html,
body {
  margin: 0;
  background: #1e222d;
}
</style>

<style scoped>
.page {
  width: 1918px;
  height: 1159px;
  background: #1e222d;
  display: flex;
  flex-direction: column;
  overflow: hidden;
  font-family: Roboto, "Liberation Sans", sans-serif;
}

.topbar {
  height: 27px;
  line-height: 31px;
  padding-left: 10px;
  font-size: 12.8px;
  color: #c9ccd3;
}

.charts {
  display: flex;
  gap: 5px;
  padding: 0 10px;
  height: 1097px;
}

.panel {
  position: relative;
  display: flex;
  flex-direction: column;
  background: #000;
  border: 1px solid #2a2e39;
  gap: 1px;
}

.panel.daily {
  width: 1295px;
  background: #2a2e39;
}

.panel.weekly {
  width: 594px;
  background: #2a2e39;
}

.pane {
  display: block;
  background: #000;
}

.currency {
  position: absolute;
  top: 3px;
  right: 3px;
  width: 64px;
  height: 26px;
  line-height: 24px;
  padding-left: 9px;
  box-sizing: border-box;
  background: #161a25;
  border: 1px solid #2a2e39;
  border-radius: 4px;
  font-size: 12px;
  color: #c0c3cb;
}

.footer {
  flex: 1;
  display: flex;
  align-items: center;
  gap: 3px;
  padding-left: 10px;
  font-size: 13.5px;
  color: #d1d4dc;
}

.tv-logo {
  display: block;
}

text {
  font-family: Roboto, "Liberation Sans", sans-serif;
  dominant-baseline: central;
}

.axis {
  font-size: 14px;
  fill: #8f929b;
}

.lbl {
  font-size: 13.5px;
}

.time {
  font-size: 13.5px;
  fill: #a6a9b1;
}

.year {
  font-weight: 700;
}

.tiny {
  font-size: 11px;
  fill: #8f929b;
}

.badge {
  font-size: 14px;
  fill: #ffffff;
}

.mark-big {
  font-size: 96px;
  fill: #1d1e20;
}

.mark-small {
  font-size: 49px;
  fill: #1d1e20;
}
</style>
